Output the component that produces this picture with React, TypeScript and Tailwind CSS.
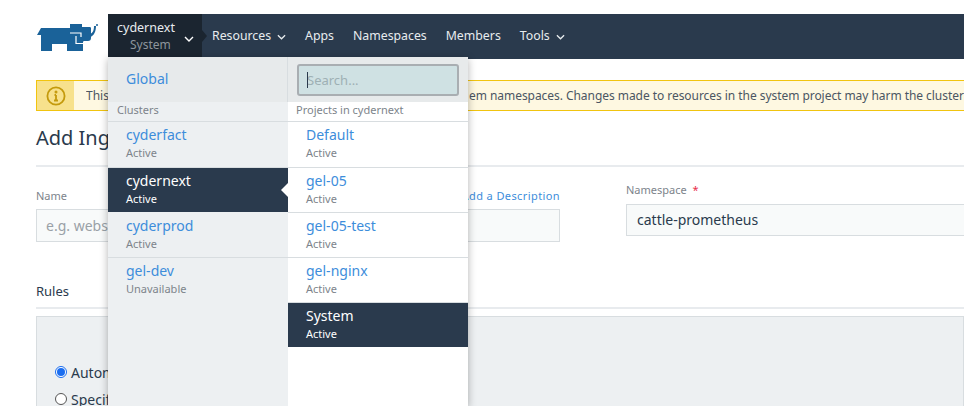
const FONT = "font-['Noto_Sans',sans-serif]";

const clusters = [
  { name: 'cyderfact', state: 'Active' },
  { name: 'cydernext', state: 'Active', active: true },
  { name: 'cyderprod', state: 'Active' },
  { name: 'gel-dev', state: 'Unavailable', last: true },
];

const projects = [
  { name: 'Default', state: 'Active' },
  { name: 'gel-05', state: 'Active' },
  { name: 'gel-05-test', state: 'Active' },
  { name: 'gel-nginx', state: 'Active' },
  { name: 'System', state: 'Active', active: true },
];

function Chevron({ className }: { className: string }) {
  return (
    <svg className={className} viewBox="0 0 10 6" fill="none" stroke="currentColor" strokeWidth={1.4}>
      <path d="M1 1l4 4 4-4" />
    </svg>
  );
}

function Logo() {
  return (
    <svg className="w-[62px] h-[28px]" viewBox="36 22 62 28" fill="#1a6299">
      <path d="M37 34L41 27H70V23H82V26H90C91 26 91 27 91 28V37C91 39 90 40 88 40H84C83 40 83 41 83 42V50H67V43H52V50H41V34Z" />
      <path d="M70 32H81V36" fill="none" stroke="#fff" strokeWidth={1.2} />
      <path d="M76 35V42.5H83" fill="none" stroke="#fff" strokeWidth={1.2} />
      <path d="M90 33C93 32 94 29 94 25H96C96 30 94 35 90 36Z" />
      <circle cx="97" cy="24" r="1" />
    </svg>
  );
}

function NavItem({ label, caret }: { label: string; caret?: boolean }) {
  return (
    <div className="flex items-center gap-[6px] text-[12.3px] text-[#e8ecef]">
      {label}
      {caret && <Chevron className="w-[9px] h-[6px] mt-px" />}
    </div>
  );
}

function MenuRow({ name, state, active, arrow, last }: { name: string; state: string; active?: boolean; arrow?: boolean; last?: boolean }) {
  return (
    <div
      className={`relative h-[45px] first:h-[46px] pl-[18px] pt-[3px] border-b ${
        active ? 'bg-[#2a3a4d] bg-clip-padding text-white border-transparent' : 'text-[#3d8ddb]'
      } ${last ? 'border-transparent' : 'border-[#d8dde0]'}`}
    >
      <div className="text-[14px] leading-[20px]">{name}</div>
      <div className={`text-[11px] leading-[16px] ${active ? 'text-white' : 'text-[#7d848b]'}`}>{state}</div>
      {arrow && (
        <div className="absolute right-0 top-[15px] w-0 h-0 border-y-[7px] border-y-transparent border-r-[7px] border-r-white" />
      )}
    </div>
  );
}

export default function App() {
  return (
    <div className={`relative w-[964px] h-[406px] overflow-hidden bg-white text-[#2a3a4d] ${FONT}`}>
      {/* Top bar */}
      <header className="flex pt-[14px]">
        <div className="w-[108px] pl-[36px] pt-[9px]">
          <Logo />
        </div>
        <nav className="flex-1 flex h-[45px] bg-[#2a3a4d]">
          <div className="relative w-[94px] h-[43px] bg-[#1b2530] pl-[9px] pt-[6px] text-[12.5px] leading-[16px]">
            <div className="text-[#e8ecef]">cydernext</div>
            <div className="mt-px pl-[13px] text-[12px] text-[#8d959c]">System</div>
            <Chevron className="absolute left-[76px] top-[22px] w-[10px] h-[6px] text-white" />
            <div className="absolute -right-[5px] top-[16px] w-0 h-0 border-y-[6px] border-y-transparent border-l-[5px] border-l-[#1b2530]" />
          </div>
          <div className="flex items-center gap-[19px] pl-[10px]">
            <NavItem label="Resources" caret />
            <NavItem label="Apps" />
            <NavItem label="Namespaces" />
            <NavItem label="Members" />
            <NavItem label="Tools" caret />
          </div>
        </nav>
      </header>

      {/* Warning banner */}
      <div className="ml-[36px] mt-[21px] flex h-[31px] w-[1000px] border border-[#f1c40f] bg-[#fef8e1]">
        <div className="flex w-[37px] items-center justify-center bg-[#f7e18c]">
          <svg className="w-[20px] h-[20px]" viewBox="0 0 20 20" fill="none" stroke="#c49a0c" strokeWidth={1.8}>
            <circle cx="10" cy="10" r="8.6" />
            <path d="M10 9v5.5M8 14.5h4M8.5 9H10" />
            <circle cx="10" cy="6" r="0.6" fill="#c49a0c" />
          </svg>
        </div>
        <div className="flex items-center pl-[12px] text-[12px] whitespace-nowrap text-[#4b5663]">
          <span className="w-[383px] shrink-0 overflow-hidden">This project contains syst</span>
          <span className="tracking-[-0.05px]">em namespaces. Changes made to resources in the system project may harm the cluster</span>
        </div>
      </div>

      {/* Page body */}
      <main className="pl-[36px]">
        <h1 className="mt-[13px] text-[20px] leading-[28px] whitespace-nowrap">Add Ingress</h1>
        <div className="mt-[13px] h-[2px] bg-[#e8ebee]" />

        <div className="flex">
          <div className="w-[524px] shrink-0 pt-[21px]">
            <div className="flex justify-between text-[11px] leading-[16px]">
              <span className="text-[#7d848b]">Name</span>
              <span className="text-[#3d8ddb] tracking-[0.4px]">Add a Description</span>
            </div>
            <div className="mt-[5px] h-[33px] border border-[#d8dde0] bg-[#f8fafa] pl-[9px] text-[14px] leading-[31px] text-[#9aa1a7]">
              e.g. website
            </div>
          </div>
          <div className="ml-[66px] w-[400px] shrink-0 pt-[15px]">
            <div className="text-[11px] leading-[16px] text-[#7d848b]">
              Namespace <span className="ml-[3px] text-[#e8304a]">*</span>
            </div>
            <div className="mt-[6px] h-[32px] border border-[#d8dde0] bg-[#f8fafa] pl-[10px] text-[14px] leading-[30px]">
              cattle-prometheus
            </div>
          </div>
        </div>

        <div className="mt-[40px] text-[13px] leading-[18px]">Rules</div>
        <div className="mt-[7px] h-[2px] bg-[#e8ebee]" />
        <div className="mt-[7px] h-[100px] border border-[#d8dde0] bg-[#edf0f2] pl-[18px] pt-[46px] text-[14px] whitespace-nowrap">
          <div className="flex h-[18px] items-center gap-[4px]">
            <span className="flex w-[12px] h-[12px] items-center justify-center rounded-full border border-[#1a6df0] bg-white">
              <span className="w-[8px] h-[8px] rounded-full bg-[#1a6df0]" />
            </span>
            Automatically generate
          </div>
          <div className="mt-[9px] flex h-[18px] items-center gap-[4px]">
            <span className="w-[12px] h-[12px] rounded-full border border-[#555] bg-white" />
            Specify a hostname
          </div>
        </div>
      </main>

      {/* Cluster / project switcher menu */}
      <div className="absolute left-[108px] top-[57px] bottom-0 flex w-[360px] shadow-[0_2px_8px_rgba(0,0,0,0.3)]">
        <div className="w-[180px] bg-[#edf0f2]">
          <div className="h-[45px] border-r border-[#d8dde0] bg-[#e7eaeb] pl-[18px] pt-[12px] text-[14px] leading-[20px] text-[#3d8ddb]">Global</div>
          <div className="h-[20px] border-b border-[#d8dde0] pl-[9px] text-[11px] leading-[16px] text-[#7d848b]">Clusters</div>
          <div>
            {clusters.map((c) => (
              <MenuRow key={c.name} name={c.name} state={c.state} active={c.active} arrow={c.active} last={c.last} />
            ))}
          </div>
        </div>
        <div className="w-[180px] bg-white">
          <div className="h-[45px] bg-[#e7eaeb] pl-[9px] pt-[7px]">
            <div className="relative h-[32px] w-[162px] rounded-[3px] border-2 border-[#a9aeb2] bg-[#cfe1e3] pl-[8px] text-[13px] leading-[28px] text-[#9eb0b4]">
              Search...
              <span className="absolute left-[8px] top-[6px] h-[16px] w-px bg-[#2a3a4d]" />
            </div>
          </div>
          <div className="h-[20px] border-b border-[#d8dde0] pl-[8px] text-[11px] leading-[16px] text-[#7d848b]">Projects in cydernext</div>
          <div>
            {projects.map((p) => (
              <MenuRow key={p.name} name={p.name} state={p.state} active={p.active} />
            ))}
          </div>
        </div>
      </div>
    </div>
  );
}
